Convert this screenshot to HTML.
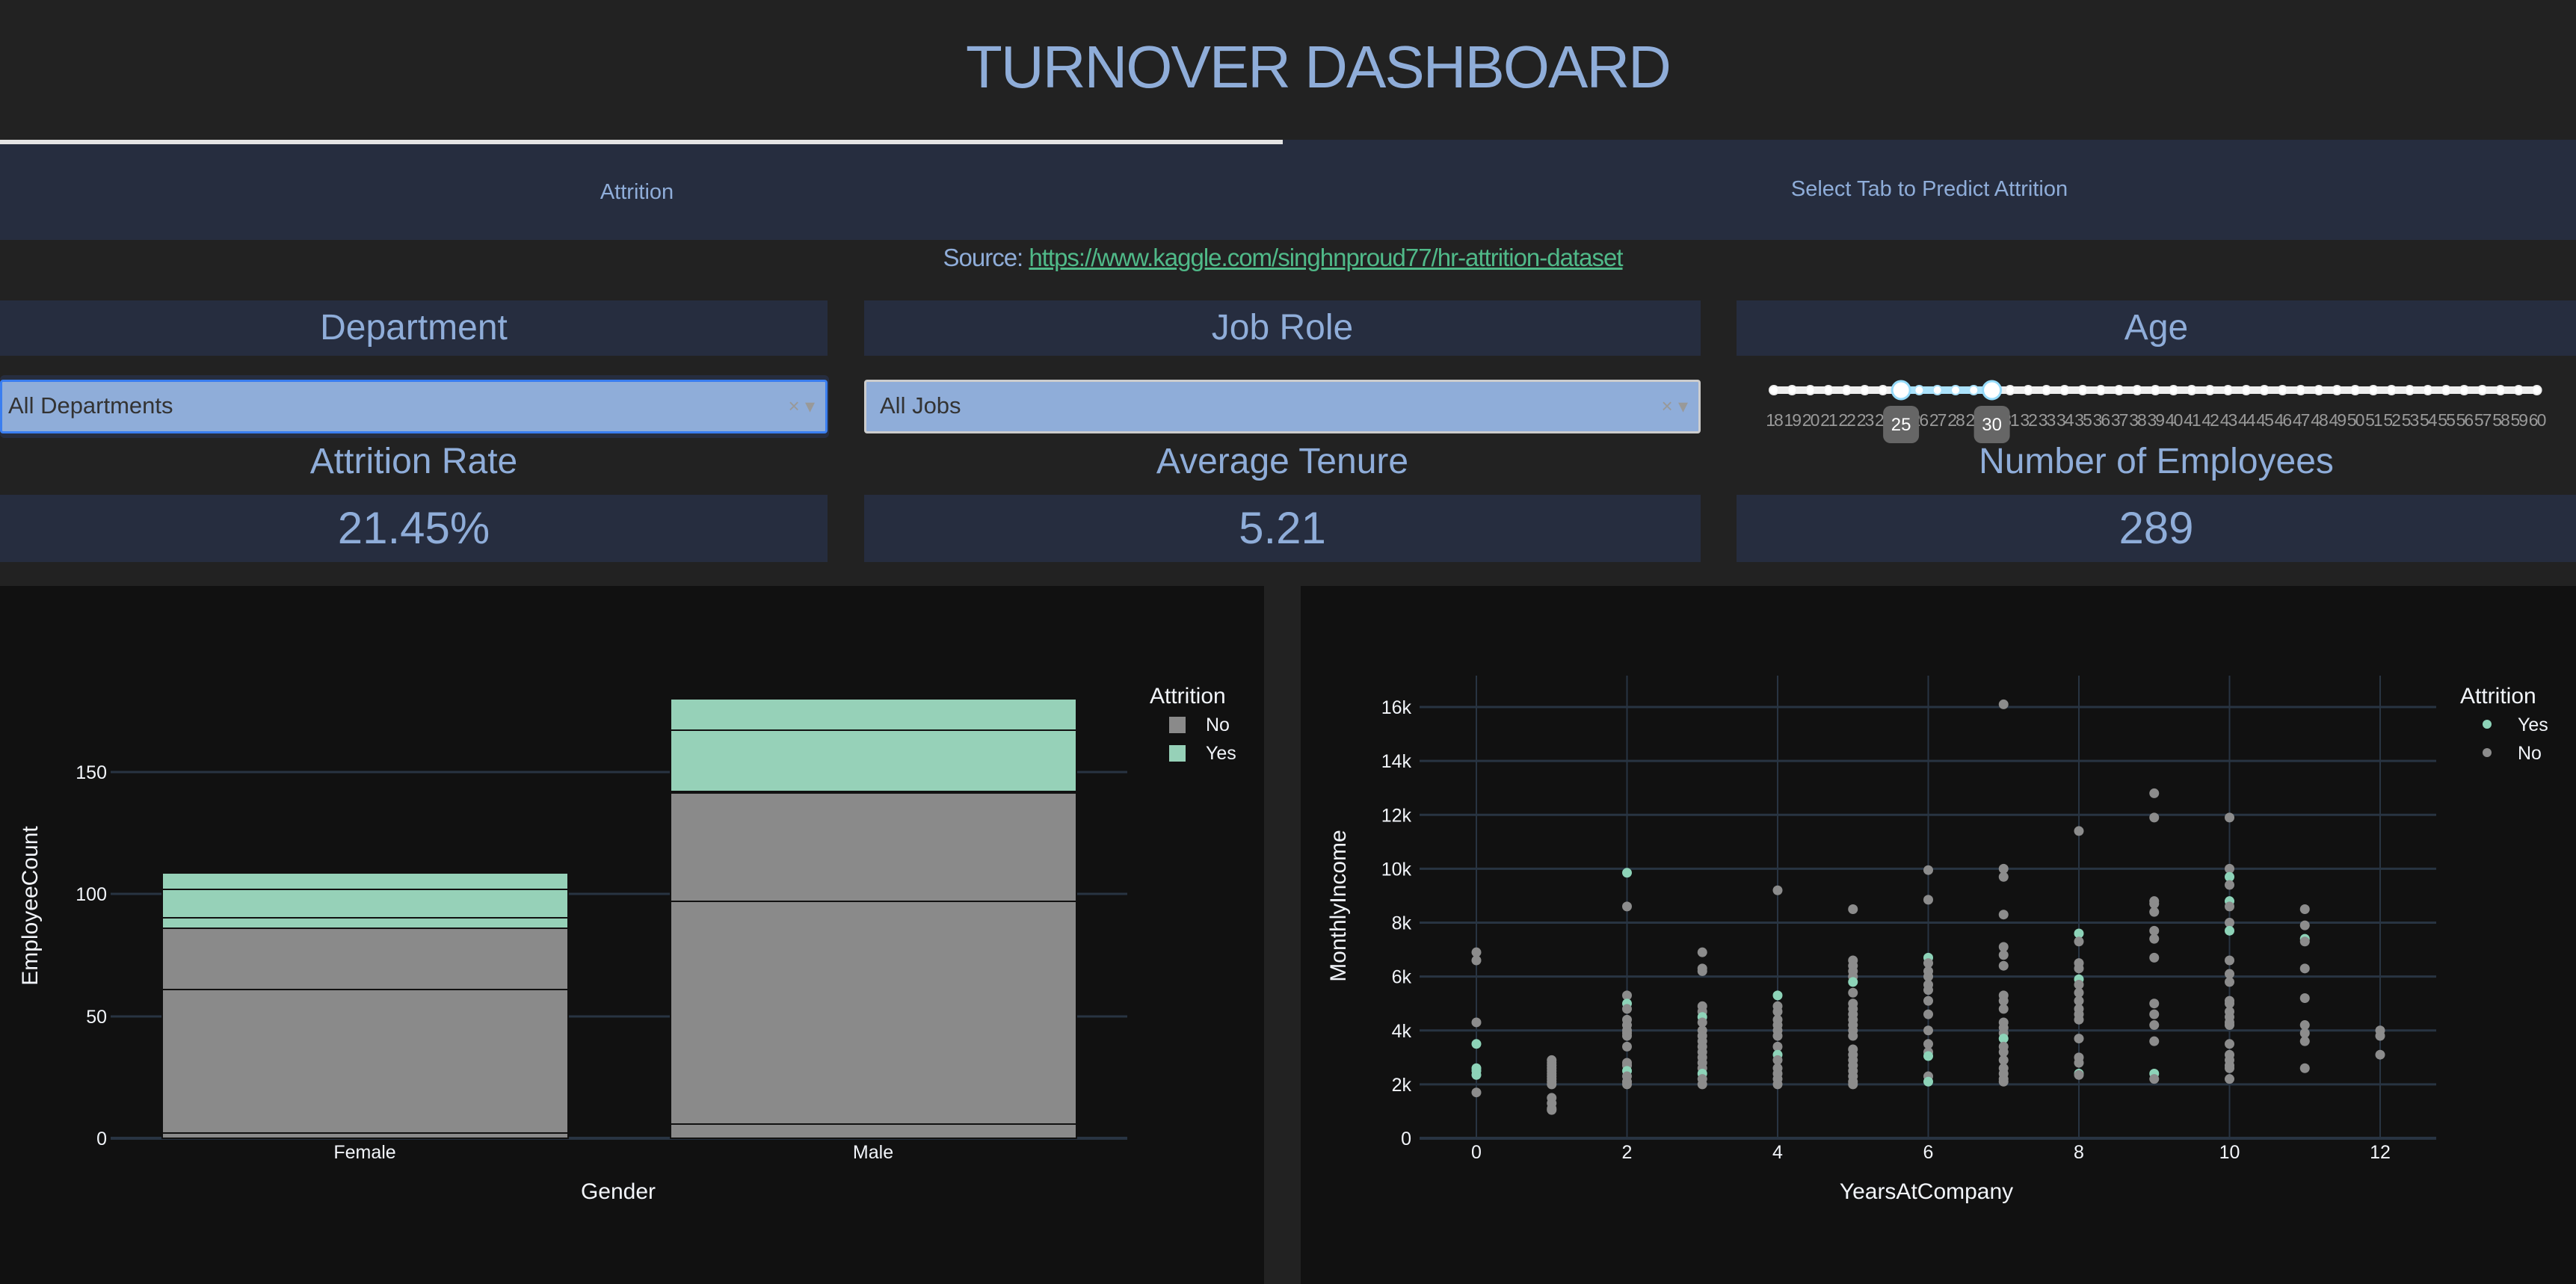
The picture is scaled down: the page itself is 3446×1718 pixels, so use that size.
<!DOCTYPE html>
<html><head><meta charset="utf-8"><style>
*{margin:0;padding:0;box-sizing:border-box}
body{width:3446px;height:1718px;background:#222222;font-family:"Liberation Sans",sans-serif;position:relative;overflow:hidden;color:#8fadd9}
.a{position:absolute}
.c{text-align:center}
.box{position:absolute;background:#262d3f;color:#8fadd9;text-align:center}
</style></head><body>
<div class="a c" style="left:0;width:3526px;top:42px;font-size:80px;line-height:96px;letter-spacing:-2px">TURNOVER DASHBOARD</div>
<div class="a" style="left:0;top:187px;width:3446px;height:134px;background:#262d3f"></div>
<div class="a" style="left:0;top:187px;width:1716px;height:6px;background:#e4e4e4"></div>
<div class="a c" style="left:0;width:1704px;top:241px;font-size:29px">Attrition</div>
<div class="a c" style="left:1716px;width:1730px;top:237px;font-size:29px">Select Tab to Predict Attrition</div>
<div class="a c" style="left:0;width:3432px;top:326px;font-size:33px;letter-spacing:-1px">Source: <span style="color:#50ba89;text-decoration:underline">https://www.kaggle.com/singhnproud77/hr-attrition-dataset</span></div>

<div class="box" style="left:0;top:402px;width:1107px;height:74px;font-size:48px;line-height:74px">Department</div>
<div class="box" style="left:1156px;top:402px;width:1119px;height:74px;font-size:48px;line-height:74px">Job Role</div>
<div class="box" style="left:2323px;top:402px;width:1123px;height:74px;font-size:48px;line-height:74px">Age</div>

<div class="a" style="left:0;top:502px;width:1109px;height:84px;background:#262d3f;border-radius:6px"></div>
<div class="a" style="left:0;top:508px;width:1107px;height:72px;background:#8fadd9;border:3px solid #3a7ef0;border-radius:4px;color:#333;font-size:31px;line-height:64px;padding-left:8px">All Departments<span style="position:absolute;right:14px;color:#999;font-size:26px">×&nbsp;▾</span></div>
<div class="a" style="left:1156px;top:508px;width:1119px;height:72px;background:#8fadd9;border:3px solid #ccc;border-radius:4px;color:#333;font-size:31px;line-height:64px;padding-left:18px">All Jobs<span style="position:absolute;right:14px;color:#999;font-size:26px">×&nbsp;▾</span></div>

<svg class="a" style="left:2300px;top:490px" width="1146" height="120" id="sl">
<rect x="73" y="27" width="1021" height="10" rx="5" fill="#eeeeee"/>
<rect x="243" y="27" width="122" height="10" fill="#abe2fb"/>
</svg>

<div class="a c" style="left:0;width:1107px;top:590px;font-size:48px">Attrition Rate</div>
<div class="a c" style="left:1156px;width:1119px;top:590px;font-size:48px">Average Tenure</div>
<div class="a c" style="left:2323px;width:1123px;top:590px;font-size:48px">Number of Employees</div>
<div class="box" style="left:0;top:662px;width:1107px;height:90px;font-size:60px;line-height:90px">21.45%</div>
<div class="box" style="left:1156px;top:662px;width:1119px;height:90px;font-size:60px;line-height:90px">5.21</div>
<div class="box" style="left:2323px;top:662px;width:1123px;height:90px;font-size:60px;line-height:90px">289</div>

<svg class="a" style="left:0;top:0" width="3446" height="1718" font-family="Liberation Sans,sans-serif">
<rect x="0" y="784" width="1691" height="934" fill="#111111"/>
<rect x="1740" y="784" width="1706" height="934" fill="#111111"/>
<g stroke="#283442" stroke-width="3">
<line x1="148" x2="1508" y1="1033" y2="1033"/><line x1="148" x2="1508" y1="1196" y2="1196"/><line x1="148" x2="1508" y1="1360" y2="1360"/><line x1="148" x2="1508" y1="1523" y2="1523" stroke-width="4"/>
</g>
<g fill="#8a8a8a" stroke="#111" stroke-width="2">
<rect x="217" y="1242" width="543" height="274"/><rect x="217" y="1516" width="543" height="7"/>
<line x1="217" x2="760" y1="1324" y2="1324"/>
<rect x="897" y="1061" width="543" height="145"/><rect x="897" y="1206" width="543" height="298"/><rect x="897" y="1504" width="543" height="19"/>
</g>
<g fill="#96d1b8" stroke="#111" stroke-width="2">
<rect x="217" y="1168" width="543" height="22"/><rect x="217" y="1190" width="543" height="38"/><rect x="217" y="1228" width="543" height="14"/>
<rect x="897" y="935" width="543" height="42"/><rect x="897" y="977" width="543" height="82"/>
</g>
<g fill="#f2f5fa" font-size="25" text-anchor="end">
<text x="143" y="1042">150</text><text x="143" y="1205">100</text><text x="143" y="1369">50</text><text x="143" y="1532">0</text>
</g>
<g fill="#f2f5fa" font-size="25" text-anchor="middle">
<text x="488" y="1550">Female</text><text x="1168" y="1550">Male</text>
<text x="827" y="1604" font-size="30">Gender</text>
<text transform="translate(50,1212) rotate(-90)" font-size="30">EmployeeCount</text>
</g>
<g fill="#f2f5fa" font-size="30"><text x="1538" y="941">Attrition</text></g>
<g fill="#f2f5fa" font-size="25"><text x="1613" y="978">No</text><text x="1613" y="1016">Yes</text></g>
<rect x="1564" y="959" width="22" height="22" fill="#8a8a8a"/><rect x="1564" y="997" width="22" height="22" fill="#96d1b8"/>

<g stroke="#283442" stroke-width="2" id="vg"></g>
<g stroke="#283442" stroke-width="3" id="hg"></g>
<g fill="#f2f5fa" font-size="25" id="lbl"></g>
<g id="pts"></g>
<g fill="#f2f5fa" font-size="30"><text x="3291" y="941">Attrition</text></g>
<g fill="#f2f5fa" font-size="25"><text x="3368" y="978">Yes</text><text x="3368" y="1016">No</text></g>
<circle cx="3327" cy="969" r="6" fill="#8dd3b8"/><circle cx="3327" cy="1007" r="6" fill="#8c8c8c"/>
<text x="2577" y="1604" fill="#f2f5fa" font-size="30" text-anchor="middle">YearsAtCompany</text>
<text transform="translate(1800,1212) rotate(-90)" fill="#f2f5fa" font-size="30" text-anchor="middle">MonthlyIncome</text>
</svg>
<script>
var NS="http://www.w3.org/2000/svg";
function el(p,t,a,tx){var e=document.createElementNS(NS,t);for(var k in a)e.setAttribute(k,a[k]);if(tx!=null)e.textContent=tx;p.appendChild(e);return e;}
var X=function(y){return 1975+y*100.75},Y=function(k){return 1523-k*36.06};
var vg=document.getElementById('vg'),hg=document.getElementById('hg'),lbl=document.getElementById('lbl'),pts=document.getElementById('pts');
for(var i=0;i<=12;i+=2){el(vg,'line',{x1:X(i),x2:X(i),y1:904,y2:1523});el(lbl,'text',{x:X(i),y:1550,'text-anchor':'middle'},i);}
for(var k=0;k<=16;k+=2){el(hg,'line',{x1:1899,x2:3259,y1:Y(k),y2:Y(k),'stroke-width':k==0?4:3});el(lbl,'text',{x:1888,y:Y(k)+9,'text-anchor':'end'},k==0?'0':k+'k');}
var d={0:"6.9 6.6 4.3 g3.5 g2.6 g2.5 g2.35 1.7",1:"2.9 2.8 2.7 2.6 2.5 2.4 2.3 2.2 2.1 2.0 1.5 1.3 1.1 1.05",
2:"g9.85 8.6 5.3 g5.0 4.8 4.4 4.2 4.0 3.9 3.8 3.4 2.8 2.7 g2.5 2.3 2.1 2.0",
3:"6.9 6.3 6.2 4.9 4.7 g4.5 4.3 4.0 3.8 3.6 3.4 3.2 3.0 2.8 2.6 g2.4 2.2 2.0",
4:"9.2 g5.3 4.9 4.7 4.4 4.2 4.0 3.8 3.4 g3.1 2.9 2.6 2.4 2.2 2.0",
5:"8.5 6.6 6.4 6.2 6.0 g5.8 5.4 5.0 4.8 4.6 4.4 4.2 4.0 3.8 3.3 3.1 2.9 2.7 2.5 2.3 2.1 2.0",
6:"9.95 8.85 g6.7 6.5 6.2 6.0 5.7 5.5 5.1 4.6 4.0 3.5 3.2 g3.05 2.3 g2.1",
7:"16.1 10.0 9.7 8.3 7.1 6.8 6.4 5.3 5.1 4.8 4.3 4.1 3.9 g3.7 3.4 3.2 2.9 2.6 2.4 2.2 2.1",
8:"11.4 g7.6 7.3 6.5 6.3 g5.9 5.7 5.4 5.1 4.8 4.6 4.4 3.7 3.0 2.8 g2.4 2.35",
9:"12.8 11.9 8.8 8.7 8.4 7.7 7.4 6.7 5.0 4.6 4.2 3.6 g2.4 2.2",
10:"11.9 10.0 g9.7 9.4 g8.8 8.6 8.0 g7.7 6.6 6.1 5.8 5.1 5.0 4.7 4.5 4.3 4.2 3.5 3.1 2.9 2.7 2.6 2.2",
11:"8.5 7.9 g7.4 7.3 6.3 5.2 4.2 3.9 3.6 2.6",12:"4.0 3.8 3.1"};
for(var yr in d){d[yr].split(' ').forEach(function(s){var g=s[0]=='g';var v=parseFloat(g?s.slice(1):s);el(pts,'circle',{cx:X(+yr),cy:Y(v),r:6.5,fill:g?'#8dd3b8':'#8c8c8c'});});}
var sl=document.getElementById('sl');
for(var a=18;a<=60;a++){var x=73+(a-18)*24.3;var inr=a>=25&&a<=30;
 if(a==25||a==30){el(sl,'circle',{cx:x,cy:32,r:12,fill:'#fff',stroke:'#96dbfa','stroke-width':3});}
 else el(sl,'circle',{cx:x,cy:32,r:6,fill:'#fff',stroke:inr?'#abe2fb':'#eee','stroke-width':2});
 if(a!=25&&a!=30)el(sl,'text',{x:x,y:80,'text-anchor':'middle','font-size':23,fill:'#999','letter-spacing':'-2'},a);}
[25,30].forEach(function(a){var x=73+(a-18)*24.3;el(sl,'rect',{x:x-24,y:53,width:48,height:50,rx:10,fill:'#666'});el(sl,'text',{x:x,y:86,'text-anchor':'middle','font-size':24,fill:'#fff'},a);});
</script>
</body></html>
